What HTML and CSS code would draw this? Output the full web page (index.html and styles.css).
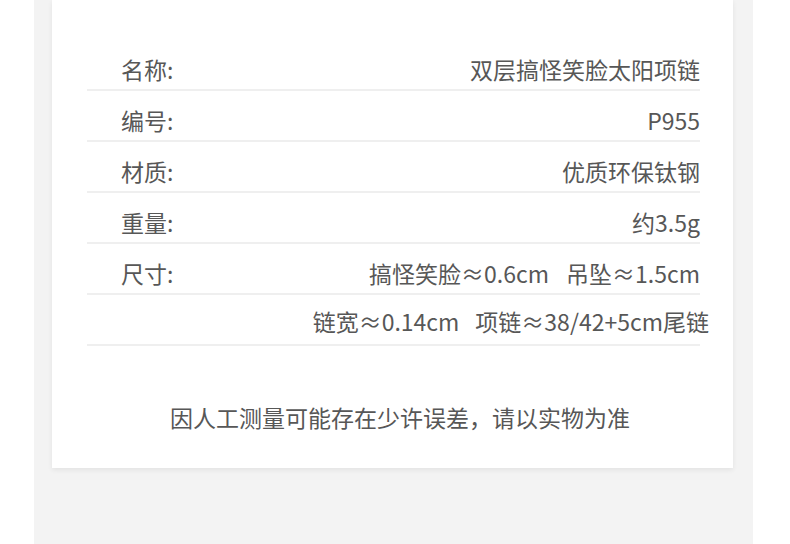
FILE: index.html
```html
<!DOCTYPE html>
<html lang="zh-CN">
<head>
<meta charset="utf-8">
<link rel="stylesheet" href="styles.css">
</head>
<body>
<div class="page">
  <div class="card">
    <div class="table">
      <div class="row"><span class="label">名称:</span><span class="value">双层搞怪笑脸太阳项链</span></div>
      <div class="row"><span class="label">编号:</span><span class="value">P955</span></div>
      <div class="row"><span class="label">材质:</span><span class="value">优质环保钛钢</span></div>
      <div class="row"><span class="label">重量:</span><span class="value">约3.5g</span></div>
      <div class="row"><span class="label">尺寸:</span><span class="value">搞怪笑脸≈0.6cm<span class="gap"></span>吊坠≈1.5cm</span></div>
      <div class="row row-cont"><span class="value value-over">链宽≈0.14cm<span class="gap gap-sm"></span>项链≈38/42+5cm尾链</span></div>
    </div>
    <p class="note">因人工测量可能存在少许误差，请以实物为准</p>
  </div>
</div>
</body>
</html>
```

FILE: styles.css
```css
html, body {
  margin: 0;
  padding: 0;
  background: #ffffff;
}
body {
  font-family: "Noto Sans CJK SC", "Noto Sans", sans-serif;
  color: #575757;
}
.page {
  margin-left: 34px;
  width: 719px;
  min-height: 544px;
  box-sizing: border-box;
  background: #f3f3f3;
  padding: 0 20px 0 18px;
}
.card {
  background: #ffffff;
  height: 468px;
  box-sizing: border-box;
  padding: 40px 33px 0 35px;
  box-shadow: 0 2px 5px rgba(0, 0, 0, 0.07);
}
.table {
  display: flex;
  flex-direction: column;
}
.row {
  display: flex;
  justify-content: space-between;
  align-items: center;
  height: 51px;
  box-sizing: border-box;
  padding-top: 8px;
  font-size: 23px;
  line-height: 30px;
  border-bottom: 2px solid #efefef;
  white-space: nowrap;
}
.row-cont {
  justify-content: flex-end;
  padding-top: 3px;
}
.label {
  padding-left: 34px;
}
.value-over {
  margin-right: -9px;
}
.gap {
  display: inline-block;
  width: 17px;
}
.gap-sm {
  width: 16px;
}
.note {
  margin: 56px 0 0 0;
  padding-left: 13px;
  text-align: center;
  font-size: 23px;
  line-height: 30px;
}
```
